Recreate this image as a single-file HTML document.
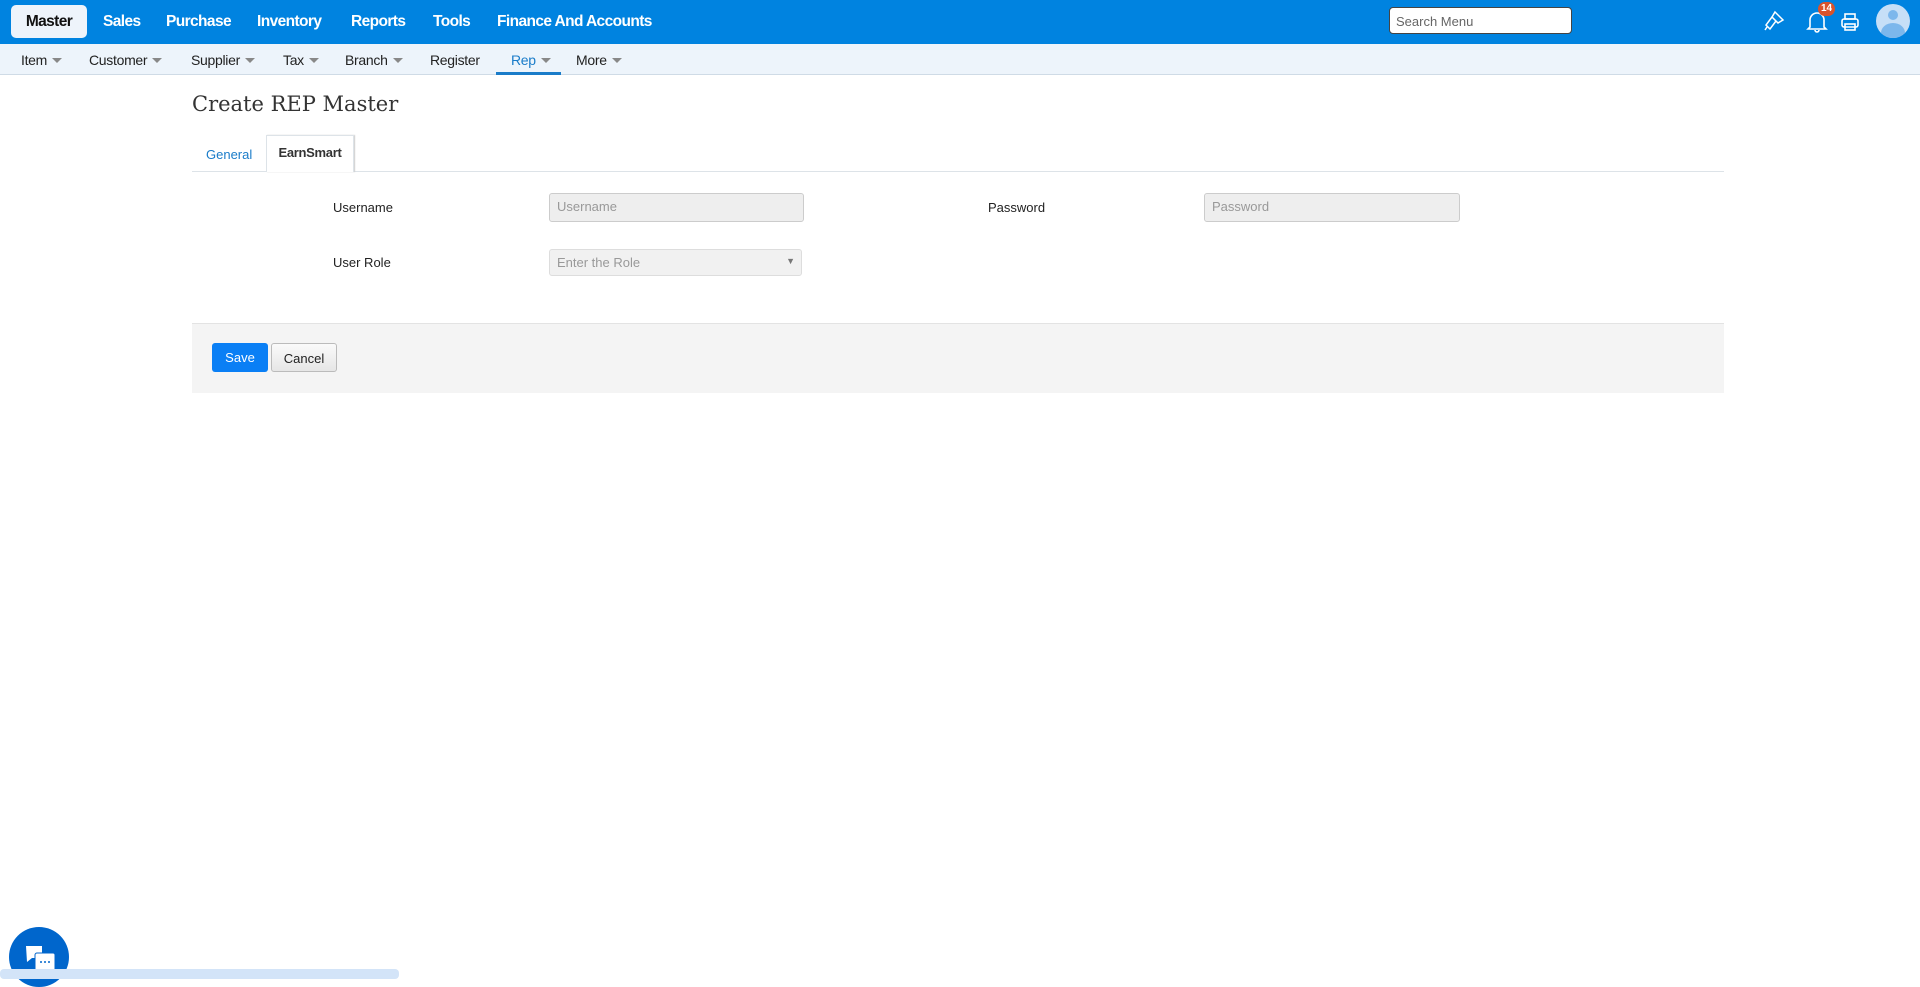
<!DOCTYPE html>
<html><head><meta charset="utf-8"><style>
*{box-sizing:border-box;margin:0;padding:0}
body{width:1920px;height:975px;overflow:hidden;background:#fff;font-family:"Liberation Sans",sans-serif;position:relative}
.top{position:absolute;left:0;top:0;width:1920px;height:44px;background:#0083e0}
.top .m{position:absolute;top:13px;color:#fff;font-weight:bold;font-size:15.5px;letter-spacing:-0.6px}
.master{position:absolute;left:11px;top:5px;width:76px;height:33px;background:#eef4fb;border-radius:5px;color:#111;font-weight:bold;font-size:15.5px;text-align:center;line-height:33px;letter-spacing:-0.6px}
.search{position:absolute;left:1389px;top:7px;width:183px;height:27px;background:#fff;border:1px solid #444;border-radius:4px;font-size:13px;color:#666;padding:6px 6px}
.sub{position:absolute;left:0;top:44px;width:1920px;height:31px;background:#edf4fb;border-bottom:1px solid #cfdbe6}
.sub span{position:absolute;top:8px;font-size:14px;color:#222;letter-spacing:-0.3px}
.car{display:inline-block;width:0;height:0;border-left:5px solid transparent;border-right:5px solid transparent;border-top:5px solid #888;margin-left:5px;vertical-align:2px}
.title{position:absolute;left:192px;top:92px;font-family:"DejaVu Serif",serif;font-size:21px;color:#333}
.tabline{position:absolute;left:192px;top:171px;width:1532px;height:1px;background:#dde3e8}
.tab{position:absolute;left:266px;top:135px;width:88px;height:37px;background:#fff;border:1px solid #dde3e8;border-bottom:none;box-shadow:1px 0 1px #ccc;font-size:13px;font-weight:bold;color:#333;text-align:center;line-height:34px;letter-spacing:-0.3px}
.gen{position:absolute;left:206px;top:147px;font-size:13px;color:#1a7cc9}
.lbl{position:absolute;font-size:13px;color:#222}
.inp{position:absolute;background:#eee;border:1px solid #ccc;border-radius:3px;font-size:13px;color:#999;padding:5px 7px}
.foot{position:absolute;left:192px;top:323px;width:1532px;height:70px;background:#f4f4f4;border-top:1px solid #e3e3e3}
.btn{position:absolute;top:343px;height:29px;border-radius:3px;font-size:13px;line-height:29px;text-align:center}
</style></head><body>
<div class="top">
<div class="master">Master</div>
<span class="m" style="left:103px">Sales</span>
<span class="m" style="left:166px">Purchase</span>
<span class="m" style="left:257px">Inventory</span>
<span class="m" style="left:351px">Reports</span>
<span class="m" style="left:433px">Tools</span>
<span class="m" style="left:497px">Finance And Accounts</span>
<div class="search">Search Menu</div>
<svg style="position:absolute;left:1762px;top:9px" width="24" height="24" viewBox="0 0 24 24" fill="none" stroke="#fff" stroke-width="1.5"><path d="M13 3l8 8-5 3-6-6z"/><path d="M10 8l-6 8 4 4 6-8"/><path d="M5 18l-2 3"/></svg>
<svg style="position:absolute;left:1806px;top:9px" width="22" height="24" viewBox="0 0 22 24" fill="none" stroke="#fff" stroke-width="1.6"><path d="M4 18V11a7 7 0 0 1 14 0v7l2 2H2z"/><path d="M9 21a2 2 0 0 0 4 0"/></svg>
<div style="position:absolute;left:1818px;top:2px;width:17px;height:14px;border-radius:7px;background:#d9532c;color:#fff;font-size:10px;font-weight:bold;text-align:center;line-height:14px">14</div>
<svg style="position:absolute;left:1840px;top:12px" width="20" height="20" viewBox="0 0 20 20" fill="none" stroke="#fff" stroke-width="1.6"><rect x="5" y="2" width="10" height="5"/><rect x="2" y="7" width="16" height="8" rx="2"/><rect x="5" y="12" width="10" height="6"/></svg>
<div style="position:absolute;left:1876px;top:4px;width:34px;height:34px;border-radius:50%;background:#c6dff7;overflow:hidden"><div style="position:absolute;left:12px;top:6px;width:10px;height:10px;border-radius:50%;background:#7cb7ec"></div><div style="position:absolute;left:5px;top:19px;width:24px;height:20px;border-radius:50%;background:#7cb7ec"></div></div>
</div>
<div class="sub">
<span style="left:21px">Item<i class="car"></i></span>
<span style="left:89px">Customer<i class="car"></i></span>
<span style="left:191px">Supplier<i class="car"></i></span>
<span style="left:283px">Tax<i class="car"></i></span>
<span style="left:345px">Branch<i class="car"></i></span>
<span style="left:430px">Register</span>
<span style="left:511px;color:#1a7cc9">Rep<i class="car"></i></span>
<span style="left:576px">More<i class="car"></i></span>
<div style="position:absolute;left:496px;top:28px;width:65px;height:3px;background:#1a7cc9"></div>
</div>
<div class="title">Create REP Master</div>
<div class="tabline"></div>
<div class="gen">General</div>
<div class="tab">EarnSmart</div>
<div class="lbl" style="left:333px;top:200px">Username</div>
<div class="inp" style="left:549px;top:193px;width:255px;height:29px">Username</div>
<div class="lbl" style="left:988px;top:200px">Password</div>
<div class="inp" style="left:1204px;top:193px;width:256px;height:29px">Password</div>
<div class="lbl" style="left:333px;top:255px">User Role</div>
<div class="inp" style="left:549px;top:249px;width:253px;height:27px;background:#f1f1f1;border-color:#ddd">Enter the Role<span style="position:absolute;right:6px;top:6px;font-size:9px;color:#777">▼</span></div>
<div class="foot"></div>
<div class="btn" style="left:212px;width:56px;background:#0a7ff5;color:#fff">Save</div>
<div class="btn" style="left:271px;width:66px;background:linear-gradient(#fafafa,#e6e6e6);border:1px solid #bbb;color:#222">Cancel</div>
<div style="position:absolute;left:9px;top:927px;width:60px;height:60px;border-radius:50%;background:#0066cc"></div>
<svg style="position:absolute;left:24px;top:944px" width="34" height="28" viewBox="0 0 34 28"><path d="M2 2h16v12H8l-5 4z" fill="#fff"/><rect x="11" y="9" width="20" height="18" rx="2" fill="#fff" stroke="#0066cc" stroke-width="1"/><circle cx="17" cy="18" r="1" fill="#0066cc"/><circle cx="21" cy="18" r="1" fill="#0066cc"/><circle cx="25" cy="18" r="1" fill="#0066cc"/></svg>
<div style="position:absolute;left:0;top:969px;width:399px;height:10px;background:#d3e4f8;border-radius:4px"></div>
</body></html>
